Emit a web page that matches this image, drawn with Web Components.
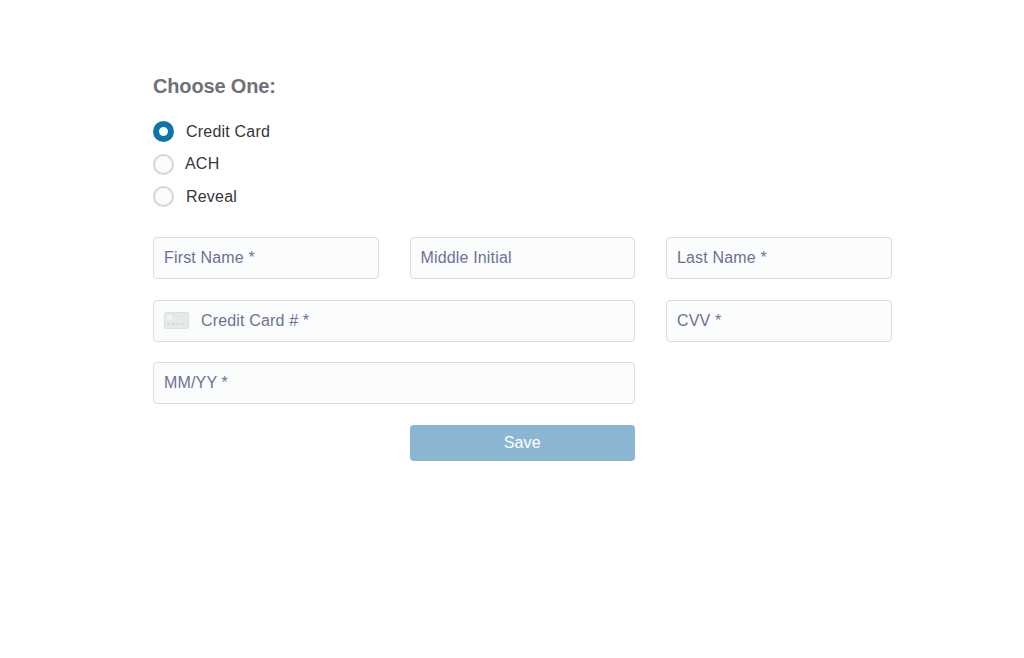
<!DOCTYPE html>
<html>
<head>
<meta charset="utf-8">
<title>Choose One</title>
<style>
  html, body { margin: 0; background: #fff; }
  body { font-family: "Liberation Sans", Arial, sans-serif; }
</style>
</head>
<body>
<template id="tmpl-form">
  <style>
    :host { display: block; box-sizing: border-box; width: 1024px; height: 658px; padding: 74px 132px 0 153px; }
    h2 { margin: 0 0 23px; font-size: 20px; line-height: 24px; font-weight: 700; color: #6f7179; letter-spacing: -0.16px; }
    .radios { display: flex; flex-direction: column; gap: 11.5px; margin-bottom: 30px; }
    .grid { display: grid; grid-template-columns: repeat(3, 225.5px); column-gap: 31px; row-gap: 20.5px; }
  </style>
  <h2>Choose One:</h2>
  <div class="radios"><slot name="radio"></slot></div>
  <div class="grid"><slot></slot></div>
</template>

<template id="tmpl-radio">
  <style>
    :host { display: flex; align-items: center; height: 21px; font-size: 16px; color: #33363b; letter-spacing: 0.2px; }
    .dot { box-sizing: border-box; width: 21px; height: 21px; border-radius: 50%; border: 2px solid #d3d7db; background: #fbfcfc; margin-right: var(--label-gap, 12px); flex: none; }
    :host([checked]) .dot { border: 6px solid #0b75ac; background: #fff; }
  </style>
  <span class="dot"></span><slot></slot>
</template>

<template id="tmpl-field">
  <style>
    :host { display: flex; align-items: center; box-sizing: border-box; height: 42px; padding: 0 10px; border: 1px solid #d9dddf; border-radius: 4px; background: #fbfcfc; font-size: 16px; color: #6e7195; letter-spacing: 0.16px; }
    :host([wide]) { grid-column: span 2; }
    ::slotted(svg) { margin-right: 12px; }
  </style>
  <slot name="icon"></slot><slot></slot>
</template>

<template id="tmpl-button">
  <style>
    :host { display: flex; align-items: center; justify-content: center; height: 36px; border-radius: 4px; background: #8ab6d4; color: #fff; font-size: 16px; letter-spacing: 0.1px; grid-column: 2; }
  </style>
  <slot></slot>
</template>

<pay-form>
  <pay-radio slot="radio" checked>Credit Card</pay-radio>
  <pay-radio slot="radio" style="--label-gap:11px">ACH</pay-radio>
  <pay-radio slot="radio">Reveal</pay-radio>

  <pay-field>First Name *</pay-field>
  <pay-field>Middle Initial</pay-field>
  <pay-field>Last Name *</pay-field>
  <pay-field wide>
    <svg slot="icon" width="25" height="17" viewBox="0 0 25 17">
      <rect x="0.5" y="0.5" width="24" height="16" rx="1.5" fill="#e6e8ec" stroke="#dcdfe4"/>
      <rect x="3" y="3.5" width="5" height="4" fill="#f4f5f7"/>
      <path d="M3 12h3M7.5 12h3M12 12h3M16.5 12h3" stroke="#c4c8cf" stroke-width="1"/>
    </svg>
    Credit Card # *
  </pay-field>
  <pay-field>CVV *</pay-field>
  <pay-field wide>MM/YY *</pay-field>
  <span></span>
  <pay-button>Save</pay-button>
</pay-form>

<script>
  function define(name, tmplId) {
    customElements.define(name, class extends HTMLElement {
      connectedCallback() {
        if (this.shadowRoot) return;
        this.attachShadow({mode: 'open'});
        this.shadowRoot.append(document.getElementById(tmplId).content.cloneNode(true));
      }
    });
  }
  define('pay-form', 'tmpl-form');
  define('pay-radio', 'tmpl-radio');
  define('pay-field', 'tmpl-field');
  define('pay-button', 'tmpl-button');
</script>
</body>
</html>
